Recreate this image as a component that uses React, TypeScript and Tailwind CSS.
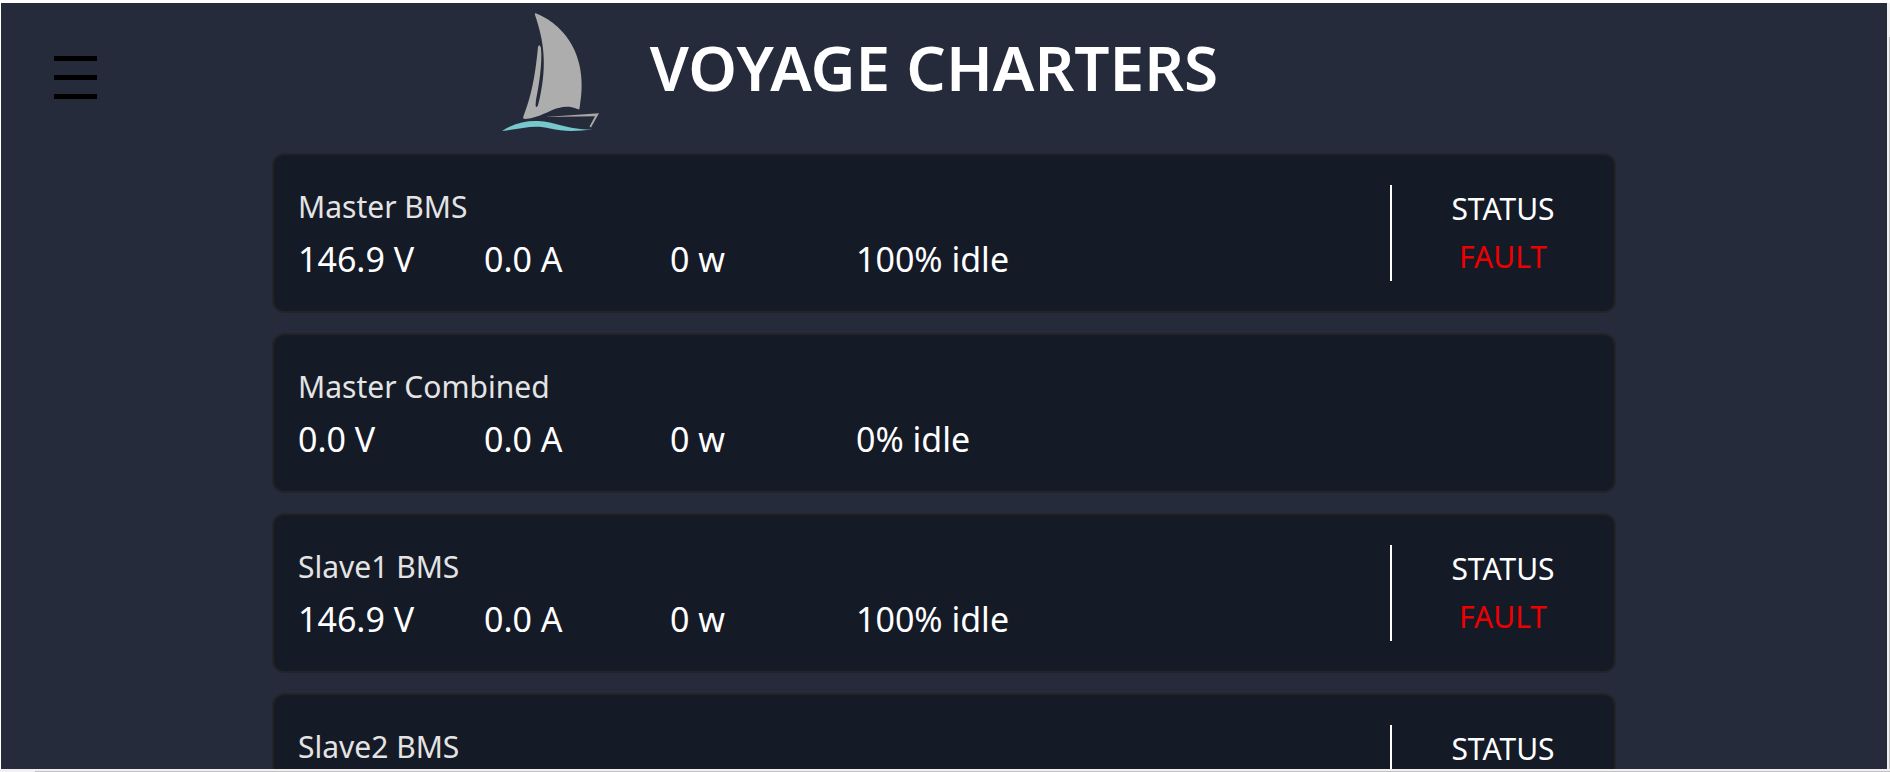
type Status = 'FAULT' | 'OK';

interface Bank {
  name: string;
  voltage: string;
  current: string;
  power: string;
  charge: string;
  status?: Status;
}

const banks: Bank[] = [
  { name: 'Master BMS', voltage: '146.9 V', current: '0.0 A', power: '0 w', charge: '100% idle', status: 'FAULT' },
  { name: 'Master Combined', voltage: '0.0 V', current: '0.0 A', power: '0 w', charge: '0% idle' },
  { name: 'Slave1 BMS', voltage: '146.9 V', current: '0.0 A', power: '0 w', charge: '100% idle', status: 'FAULT' },
  { name: 'Slave2 BMS', voltage: '146.9 V', current: '0.0 A', power: '0 w', charge: '100% idle', status: 'FAULT' },
];

function Logo() {
  return (
    <svg viewBox="0 0 98 120" className="h-[120px] w-[98px] shrink-0" aria-hidden="true">
      <path
        fill="#adadad"
        d="M33.5 0.2C55 8 89 36 77.5 95.5Q77 97 75.500 96C60 90 50 98 38 102.500C31 105 26 106 22 106Q20.500 105.500 21.500 103C29 84 33 65 36 34Q37.500 30 39 35C40.500 50 37 72 34 87C33.500 92 33.500 94 34.500 94C36 94 36.500 90 38 84C45 52 42 28 33 2Q32.500 0 33.500 0.200Z"
      />
      <path fill="#a9a6a5" d="M43 104L97 100.200L89 114.500L87.500 113.500L93 103.200Z" />
      <path
        fill="#76c8cd"
        d="M0 118C12 110 24 107.500 36 108C53 108.500 66 117 91 116.500C76 118 62 119 48 115.500C32 111 18 116 0 118Z"
      />
    </svg>
  );
}

function BankCard({ bank }: { bank: Bank }) {
  return (
    <article className="flex h-40 shrink-0 items-center rounded-xl border-2 border-[#222427] bg-[#151a27] pl-6 text-white">
      <div className="min-w-0 flex-1">
        <h2 className="text-[30px] leading-[52px] text-[#e4e4e4]">{bank.name}</h2>
        <div className="grid grid-cols-[repeat(4,186px)] text-[34px] leading-[52px] whitespace-nowrap">
          <span>{bank.voltage}</span>
          <span>{bank.current}</span>
          <span>{bank.power}</span>
          <span>{bank.charge}</span>
        </div>
      </div>
      {bank.status && (
        <div className="flex h-24 w-56 flex-col justify-center border-l-2 border-white text-center text-[30px] leading-[48px]">
          <span>STATUS</span>
          <span className="text-[#ee0000]">{bank.status}</span>
        </div>
      )}
    </article>
  );
}

export default function App() {
  return (
    <div className="flex h-screen flex-col bg-[#f0f0f0] font-['Noto_Sans',sans-serif]">
      <div className="flex min-h-0 flex-1 border-t-3 border-l border-white">
        <div className="flex min-w-0 flex-1 flex-col overflow-y-auto bg-[#262b3b] [scrollbar-width:none]">
          <header className="grid h-[150px] shrink-0 grid-cols-[120px_1fr_288px] items-start">
            <button type="button" aria-label="Open menu" className="mt-[53px] ml-[53px] flex w-[43px] flex-col gap-[14px]">
              <span className="h-[5px] w-full bg-black" />
              <span className="h-[5px] w-full bg-black" />
              <span className="h-[5px] w-full bg-black" />
            </button>
            <div className="flex justify-center gap-[50px] pt-[10px]">
              <Logo />
              <h1 className="text-[62px] leading-[108px] font-semibold whitespace-nowrap text-white">VOYAGE CHARTERS</h1>
            </div>
          </header>
          <main className="mx-auto flex w-full max-w-[1344px] flex-col gap-5 pb-5">
            {banks.map((bank) => (
              <BankCard key={bank.name} bank={bank} />
            ))}
          </main>
        </div>
        <div className="w-[3px] shrink-0 pt-[34px] pl-[2px]">
          <div className="h-full bg-[#c1c1c1]" />
        </div>
      </div>
      <div className="h-[3px] shrink-0 pt-[2px] pl-[35px]">
        <div className="h-px bg-[#c1c1c1]" />
      </div>
    </div>
  );
}
